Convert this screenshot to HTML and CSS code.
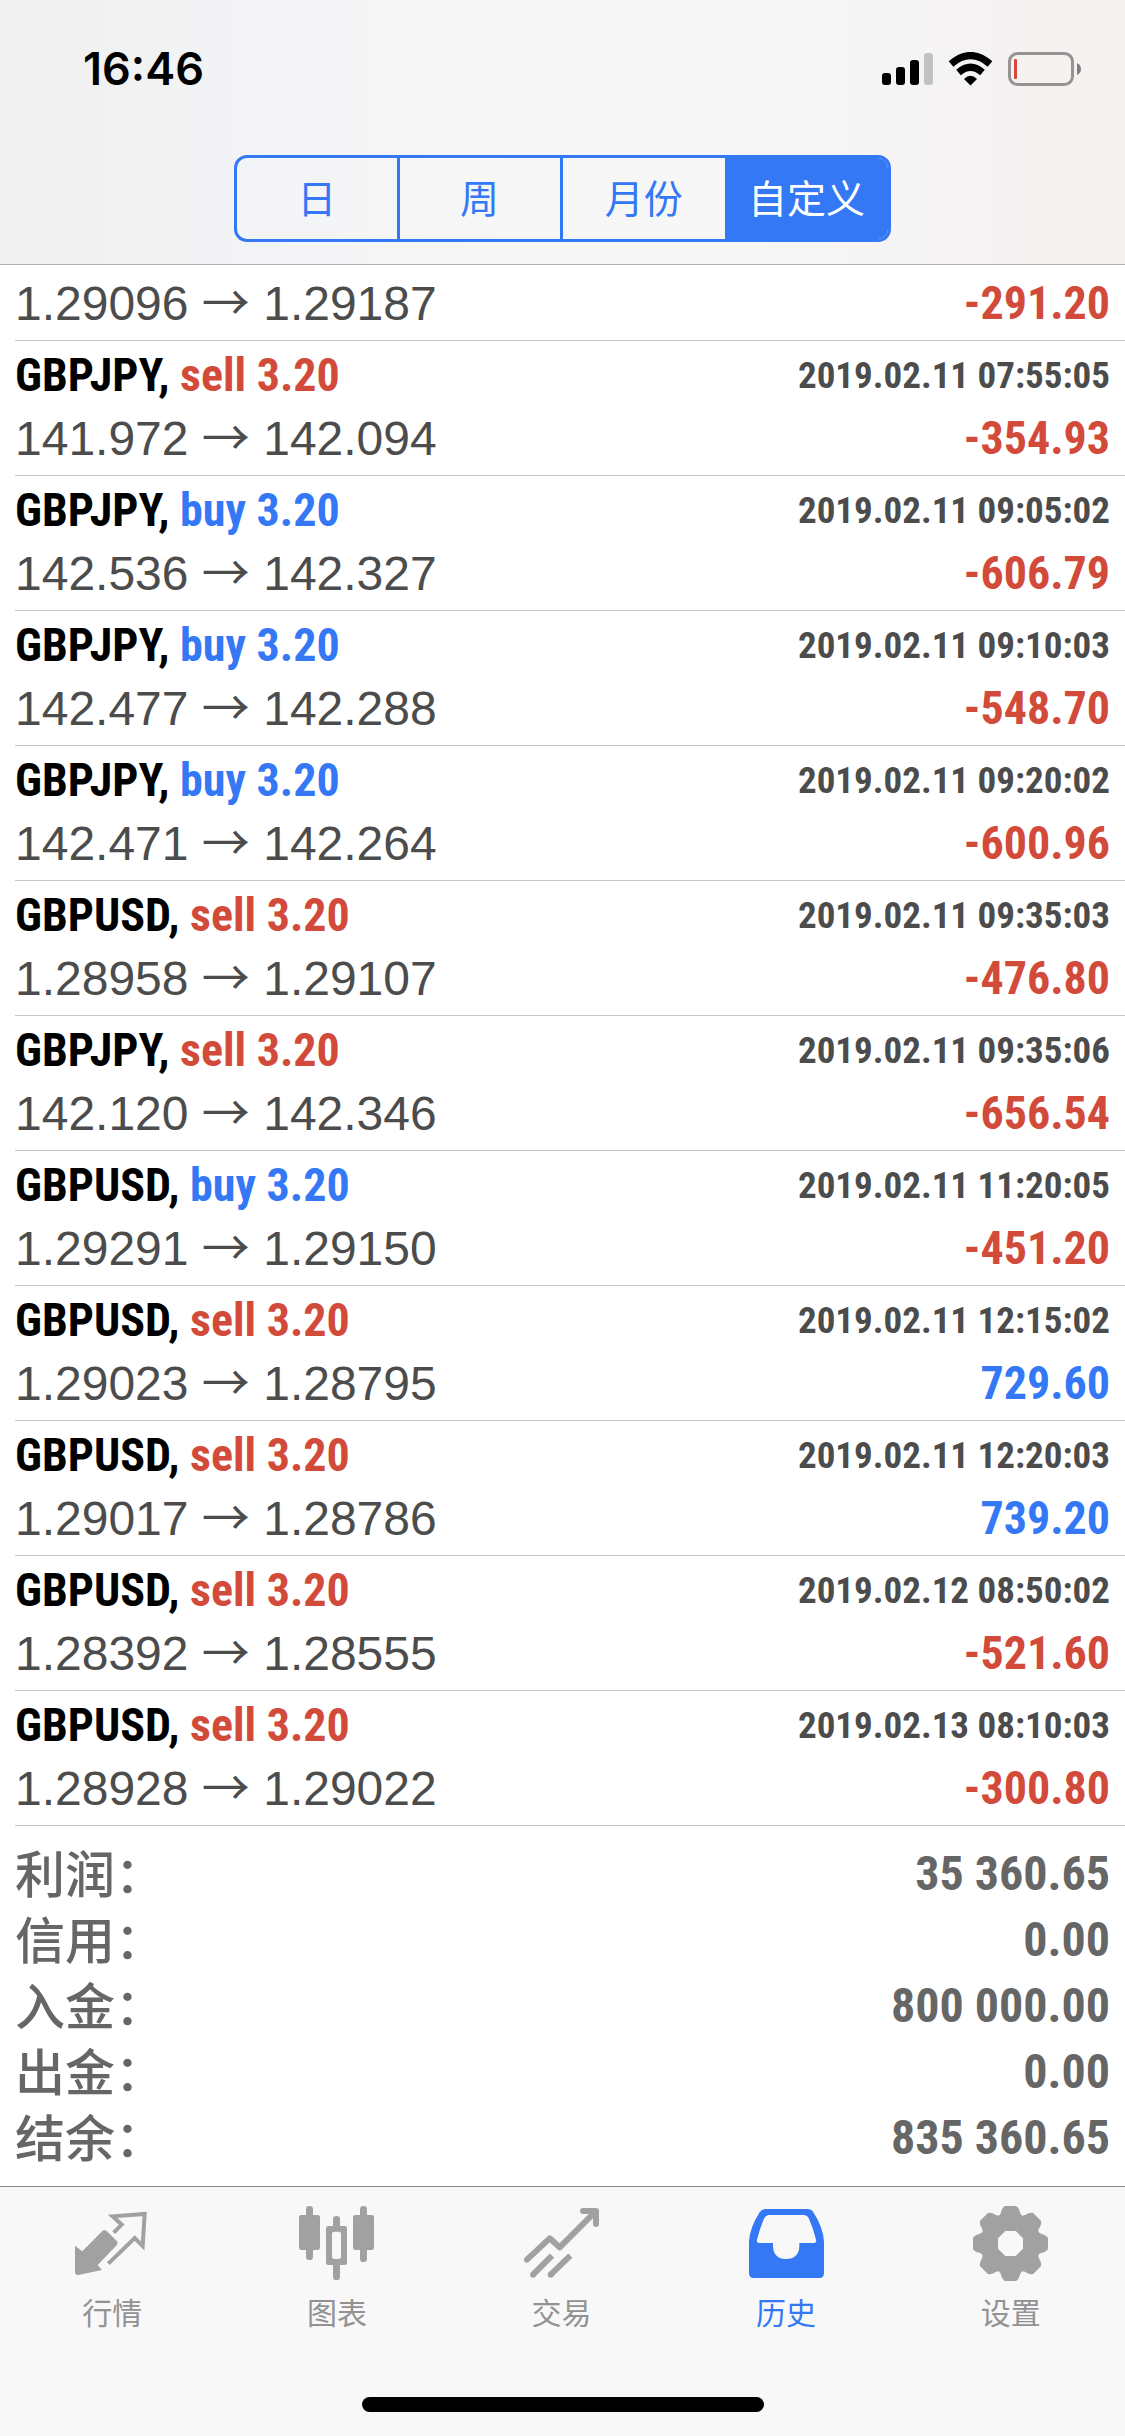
FILE: index.html
```html
<!DOCTYPE html>
<html lang="zh-CN">
<head>
<meta charset="utf-8">
<meta name="viewport" content="width=device-width, initial-scale=1">
<title>历史</title>
<link rel="stylesheet" href="styles.css">
</head>
<body>
<div class="app">
  <header class="header">
    <div class="status">
      <time class="clock">16:46</time>
      <div class="status-icons">
        <svg class="signal" viewBox="0 0 51 34" aria-hidden="true">
          <rect x="0" y="21" width="9" height="12" rx="3"/>
          <rect x="14" y="15" width="9" height="18" rx="3"/>
          <rect x="28" y="8" width="9" height="25" rx="3"/>
          <rect x="42" y="1" width="9" height="32" rx="3" fill="#c2c2c2"/>
        </svg>
        <svg class="wifi" viewBox="0 0 45 34" aria-hidden="true">
          <path d="M3 12Q22.500-5 42 12" fill="none" stroke="#000" stroke-width="7"/>
          <path d="M10.500 20.500Q22.500 10 34.500 20.500" fill="none" stroke="#000" stroke-width="7"/>
          <path d="M16 27Q22.500 20.500 29 27L22.500 33.500Z"/>
        </svg>
        <svg class="battery" viewBox="0 0 73 34" aria-hidden="true">
          <rect x="1.500" y="1.500" width="63" height="31" rx="8" fill="none" stroke="#979393" stroke-width="3"/>
          <rect x="6" y="7" width="3" height="20" rx="1" fill="#d9473c"/>
          <path d="M69 11Q73 13 73 17T69 23Z" fill="#807d7d"/>
        </svg>
      </div>
    </div>
    <div class="segmented" role="group" aria-label="时间范围">
      <button type="button">日</button>
      <button type="button">周</button>
      <button type="button">月份</button>
      <button type="button" class="selected" aria-pressed="true">自定义</button>
    </div>
  </header>

  <main class="history">
    <ul class="deals">
      <li class="deal deal-cut">
        <div class="line"><span class="prices">1.29096 <span class="arrow">→</span> 1.29187</span><span class="profit loss">-291.20</span></div>
      </li>
      <li class="deal">
        <div class="line"><span class="symbol">GBPJPY, <span class="sell">sell 3.20</span></span><time class="date">2019.02.11 07:55:05</time></div>
        <div class="line"><span class="prices">141.972 <span class="arrow">→</span> 142.094</span><span class="profit loss">-354.93</span></div>
      </li>
      <li class="deal">
        <div class="line"><span class="symbol">GBPJPY, <span class="buy">buy 3.20</span></span><time class="date">2019.02.11 09:05:02</time></div>
        <div class="line"><span class="prices">142.536 <span class="arrow">→</span> 142.327</span><span class="profit loss">-606.79</span></div>
      </li>
      <li class="deal">
        <div class="line"><span class="symbol">GBPJPY, <span class="buy">buy 3.20</span></span><time class="date">2019.02.11 09:10:03</time></div>
        <div class="line"><span class="prices">142.477 <span class="arrow">→</span> 142.288</span><span class="profit loss">-548.70</span></div>
      </li>
      <li class="deal">
        <div class="line"><span class="symbol">GBPJPY, <span class="buy">buy 3.20</span></span><time class="date">2019.02.11 09:20:02</time></div>
        <div class="line"><span class="prices">142.471 <span class="arrow">→</span> 142.264</span><span class="profit loss">-600.96</span></div>
      </li>
      <li class="deal">
        <div class="line"><span class="symbol">GBPUSD, <span class="sell">sell 3.20</span></span><time class="date">2019.02.11 09:35:03</time></div>
        <div class="line"><span class="prices">1.28958 <span class="arrow">→</span> 1.29107</span><span class="profit loss">-476.80</span></div>
      </li>
      <li class="deal">
        <div class="line"><span class="symbol">GBPJPY, <span class="sell">sell 3.20</span></span><time class="date">2019.02.11 09:35:06</time></div>
        <div class="line"><span class="prices">142.120 <span class="arrow">→</span> 142.346</span><span class="profit loss">-656.54</span></div>
      </li>
      <li class="deal">
        <div class="line"><span class="symbol">GBPUSD, <span class="buy">buy 3.20</span></span><time class="date">2019.02.11 11:20:05</time></div>
        <div class="line"><span class="prices">1.29291 <span class="arrow">→</span> 1.29150</span><span class="profit loss">-451.20</span></div>
      </li>
      <li class="deal">
        <div class="line"><span class="symbol">GBPUSD, <span class="sell">sell 3.20</span></span><time class="date">2019.02.11 12:15:02</time></div>
        <div class="line"><span class="prices">1.29023 <span class="arrow">→</span> 1.28795</span><span class="profit gain">729.60</span></div>
      </li>
      <li class="deal">
        <div class="line"><span class="symbol">GBPUSD, <span class="sell">sell 3.20</span></span><time class="date">2019.02.11 12:20:03</time></div>
        <div class="line"><span class="prices">1.29017 <span class="arrow">→</span> 1.28786</span><span class="profit gain">739.20</span></div>
      </li>
      <li class="deal">
        <div class="line"><span class="symbol">GBPUSD, <span class="sell">sell 3.20</span></span><time class="date">2019.02.12 08:50:02</time></div>
        <div class="line"><span class="prices">1.28392 <span class="arrow">→</span> 1.28555</span><span class="profit loss">-521.60</span></div>
      </li>
      <li class="deal">
        <div class="line"><span class="symbol">GBPUSD, <span class="sell">sell 3.20</span></span><time class="date">2019.02.13 08:10:03</time></div>
        <div class="line"><span class="prices">1.28928 <span class="arrow">→</span> 1.29022</span><span class="profit loss">-300.80</span></div>
      </li>
    </ul>
    <dl class="summary">
      <div class="total"><dt>利润：</dt><dd>35 360.65</dd></div>
      <div class="total"><dt>信用：</dt><dd>0.00</dd></div>
      <div class="total"><dt>入金：</dt><dd>800 000.00</dd></div>
      <div class="total"><dt>出金：</dt><dd>0.00</dd></div>
      <div class="total"><dt>结余：</dt><dd>835 360.65</dd></div>
    </dl>
  </main>

  <footer class="footer">
    <nav class="tabs">
      <a class="tab" href="#quotes">
        <svg viewBox="0 0 225 225" aria-hidden="true">
          <path d="M0 119L22 136L80 77Q88 69 96 76L126 106Q131 112 125 118L68 177L81 192L10 207Q0 208 0 198Z"/>
          <path d="M116 80L140 56L113 31L209 24L203 120L179 96L100 173" fill="none" stroke="currentColor" stroke-width="12"/>
        </svg>
        <span>行情</span>
      </a>
      <a class="tab" href="#charts">
        <svg viewBox="0 0 225 225" aria-hidden="true">
          <rect x="21" y="0" width="21" height="162" rx="10"/>
          <rect x="0" y="27" width="63" height="105" rx="7"/>
          <rect x="183" y="0" width="21" height="168" rx="10"/>
          <rect x="162" y="27" width="63" height="105" rx="7"/>
          <rect x="102" y="30" width="21" height="40" rx="10"/>
          <rect x="102" y="165" width="21" height="57" rx="10"/>
          <path fill-rule="evenodd" d="M88 60H137Q144 60 144 67V170Q144 177 137 177H88Q81 177 81 170V67Q81 60 88 60ZM106 77Q99 77 99 84V152Q99 159 106 159H119Q126 159 126 152V84Q126 77 119 77Z"/>
        </svg>
        <span>图表</span>
      </a>
      <a class="tab" href="#trade">
        <svg viewBox="0 0 225 225" aria-hidden="true">
          <g fill="none" stroke="currentColor" stroke-width="18" stroke-linecap="round" stroke-linejoin="round">
            <path d="M9 161L77 97L107 124L212 19"/>
            <path d="M177 15H216V54"/>
          </g>
          <circle cx="27" cy="206" r="9"/>
          <circle cx="80" cy="206" r="9"/>
          <path d="M27 206L84 149M80 206L139 149" fill="none" stroke="currentColor" stroke-width="18"/>
        </svg>
        <span>交易</span>
      </a>
      <a class="tab active" href="#history" aria-current="page">
        <svg viewBox="0 0 225 225" aria-hidden="true">
          <path fill-rule="evenodd" d="M50 9H175Q187 9 193 19Q223 65 225 108V202Q225 216 211 216H14Q0 216 0 202V108Q2 65 32 19Q38 9 50 9ZM62 27Q50 27 45 38Q33 65 24 101Q22 111 32 111H72V122Q74 158 111 159Q149 158 151 122V111H193Q203 111 201 101Q192 65 180 38Q175 27 163 27Z"/>
        </svg>
        <span>历史</span>
      </a>
      <a class="tab" href="#settings">
        <svg viewBox="0 0 225 225" aria-hidden="true">
          <defs>
            <path id="tooth" d="M96 0H129Q135 3 139 12Q142 27 149 30L128 75H97L76 30Q83 27 86 12Q90 3 96 0Z"/>
          </defs>
          <use href="#tooth"/>
          <use href="#tooth" transform="rotate(45 112.500 112.500)"/>
          <use href="#tooth" transform="rotate(90 112.500 112.500)"/>
          <use href="#tooth" transform="rotate(135 112.500 112.500)"/>
          <use href="#tooth" transform="rotate(180 112.500 112.500)"/>
          <use href="#tooth" transform="rotate(225 112.500 112.500)"/>
          <use href="#tooth" transform="rotate(270 112.500 112.500)"/>
          <use href="#tooth" transform="rotate(315 112.500 112.500)"/>
          <circle cx="112.500" cy="112.500" r="67" fill="none" stroke="currentColor" stroke-width="40"/>
        </svg>
        <span>设置</span>
      </a>
    </nav>
    <div class="home-indicator"></div>
  </footer>
</div>
</body>
</html>
```
FILE: styles.css
```css
* {
  box-sizing: border-box;
}

body {
  margin: 0;
  background: #fff;
  color: #000;
  font-family: "Liberation Sans", "Noto Sans CJK SC", sans-serif;
}

.app {
  display: flex;
  flex-direction: column;
  min-height: 100vh;
}

/* Header */

.header {
  display: flex;
  flex-direction: column;
  align-items: center;
  padding: 42px 44px 22px;
  border-bottom: 1px solid #b2b2b2;
  background: linear-gradient(90deg, #f0f0f0 0%, #f3f4f6 25%, #f7f7f7 45%, #f7f7f7 65%, #f4f1f0 100%);
}

.status {
  display: flex;
  align-items: center;
  justify-content: space-between;
  align-self: stretch;
  height: 54px;
  margin-bottom: 59px;
  padding-left: 39px;
}

.clock {
  font-family: Inter, sans-serif;
  font-size: 45px;
  font-weight: 600;
  line-height: 54px;
}

.status-icons {
  display: flex;
  align-items: center;
  gap: 15px;
}

.status-icons svg {
  display: block;
  height: 34px;
}

.signal {
  width: 51px;
}

.wifi {
  width: 45px;
}

.battery {
  width: 73px;
}

.segmented {
  display: grid;
  grid-template-columns: repeat(4, 1fr);
  width: 657px;
  max-width: 100%;
  overflow: hidden;
  border: 3px solid #3478f6;
  border-radius: 13px;
}

.segmented button {
  height: 81px;
  padding: 0 0 5px;
  border: 0;
  background: transparent;
  color: #3478f6;
  font-family: "Noto Sans CJK SC", sans-serif;
  font-size: 39px;
  font-weight: 400;
}

.segmented button:nth-child(-n + 2) {
  border-right: 3px solid #3478f6;
}

.segmented .selected {
  background: #3478f6;
  color: #fff;
}

/* Deals */

.history {
  flex: 1;
}

.deals {
  margin: 0;
  padding: 0 0 0 15px;
  list-style: none;
}

.deal {
  padding: 3px 15px 5px 0;
  border-bottom: 1px solid #c4c4c6;
}

.deal-cut {
  padding-top: 7px;
}

.line {
  display: flex;
  align-items: center;
  justify-content: space-between;
  line-height: 63px;
  white-space: nowrap;
}

.symbol,
.date,
.profit,
.total dd {
  font-family: "Roboto Condensed", "Liberation Sans Narrow", "Arial Narrow", "Liberation Sans", sans-serif;
  font-weight: 700;
}

.symbol {
  font-size: 46px;
}

.date {
  color: #4c4c4c;
  font-size: 37px;
}

.prices {
  color: #4c4c4c;
  font-size: 48px;
}

.arrow {
  font-family: "Noto Sans CJK SC", sans-serif;
  line-height: 0;
}

.profit {
  font-size: 46px;
}

.sell,
.loss {
  color: #d24a3a;
}

.buy,
.gain {
  color: #3478f6;
}

/* Summary */

.summary {
  margin: 0;
  padding: 14px 15px 16px;
  color: #666;
}

.total {
  display: flex;
  justify-content: space-between;
  height: 66px;
}

.total dt {
  font-family: "Noto Sans CJK SC", sans-serif;
  font-size: 50px;
  font-weight: 500;
  line-height: 62px;
}

.total dd {
  margin: 0;
  font-size: 48px;
  line-height: 68px;
}

/* Tab bar */

.footer {
  display: flex;
  flex-direction: column;
  align-items: center;
  padding: 19px 0 24px;
  border-top: 1px solid #888;
  background: #f8f8f8;
}

.tabs {
  display: grid;
  grid-template-columns: repeat(5, 1fr);
  align-self: stretch;
  margin: 0 2px 66px 0;
}

.tab {
  display: flex;
  flex-direction: column;
  align-items: center;
  gap: 10px;
  color: #929292;
  font-family: "Noto Sans CJK SC", sans-serif;
  font-size: 30px;
  line-height: 40px;
  text-decoration: none;
}

.tab svg {
  width: 75px;
  height: 75px;
  color: #a1a1a1;
  fill: currentColor;
}

.tab.active,
.tab.active svg {
  color: #3478f6;
}

.home-indicator {
  width: 402px;
  height: 15px;
  border-radius: 8px;
  background: #000;
}
```
